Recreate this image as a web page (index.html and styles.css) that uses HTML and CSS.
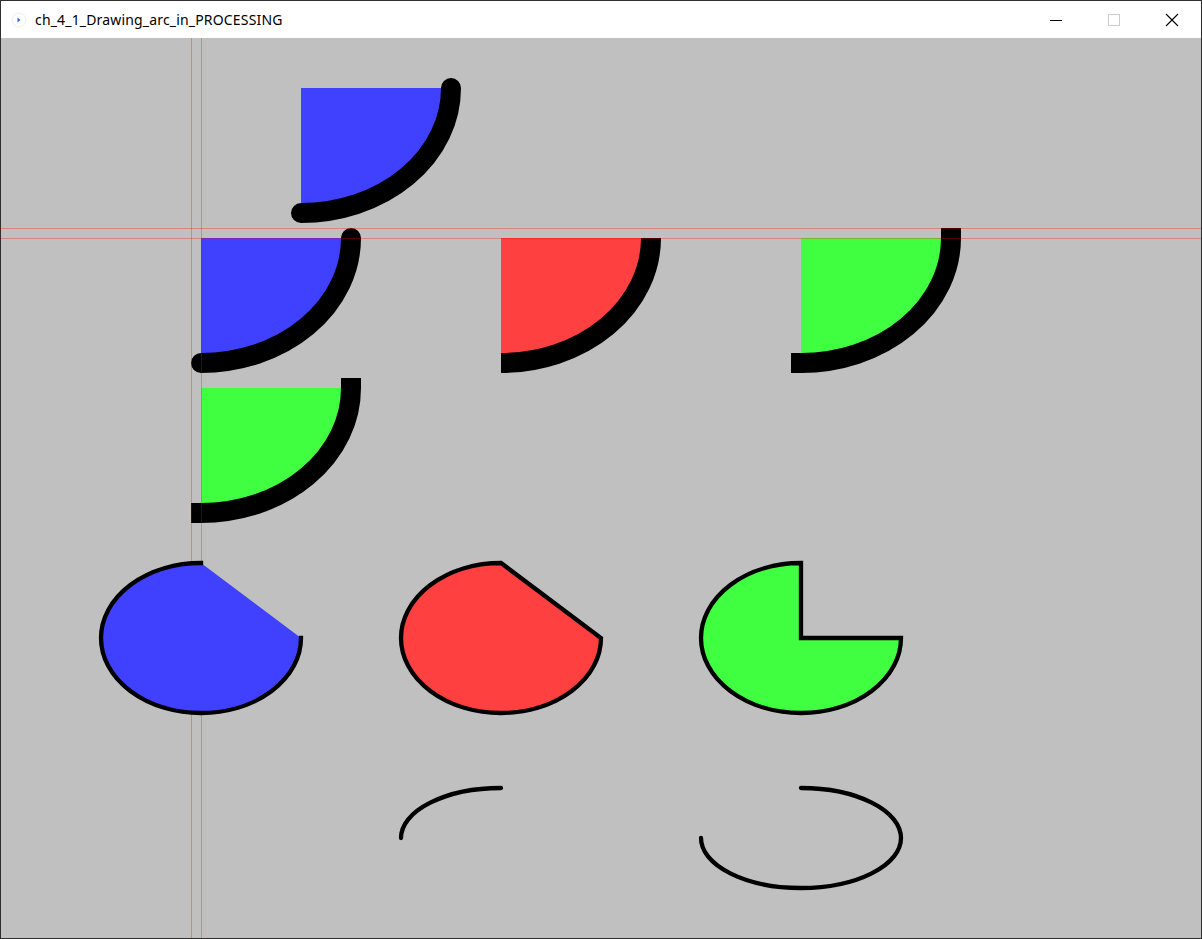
FILE: index.html
```html
<!DOCTYPE html>
<html>
<head>
<meta charset="utf-8">
<title>ch_4_1_Drawing_arc_in_PROCESSING</title>
<link rel="stylesheet" href="styles.css">
</head>
<body>
<div class="window">
  <div class="titlebar">
    <div class="app-icon">
      <svg width="16" height="16" viewBox="0 0 16 16">
        <circle cx="8" cy="8" r="7" fill="#fdfdfd" stroke="#f0f0f0"/>
        <path d="M6.5 5.5 L9.5 8 L6.5 10.5 Z" fill="#2a6fe0"/>
      </svg>
    </div>
    <div class="title">ch_4_1_Drawing_arc_in_PROCESSING</div>
    <div class="controls">
      <div class="ctl">
        <svg width="14" height="14" viewBox="0 0 14 14"><path d="M1 7.5 H13" stroke="#000" stroke-width="1"/></svg>
      </div>
      <div class="ctl">
        <svg width="14" height="14" viewBox="0 0 14 14"><rect x="1.5" y="1.5" width="11" height="11" fill="none" stroke="#cccccc" stroke-width="1"/></svg>
      </div>
      <div class="ctl">
        <svg width="14" height="14" viewBox="0 0 14 14"><path d="M1 1 L13 13 M13 1 L1 13" stroke="#000" stroke-width="1.1"/></svg>
      </div>
    </div>
  </div>
  <svg class="canvas" width="1200" height="900" viewBox="0 0 1200 900">
    <!-- row 1 -->
    <path d="M300 50 L450 50 A150 125 0 0 1 300 175 Z" class="f-blue"/>
    <path d="M450 50 A150 125 0 0 1 300 175" class="thick cap-round"/>

    <!-- row 2 -->
    <path d="M200 200 L350 200 A150 125 0 0 1 200 325 Z" class="f-blue"/>
    <path d="M350 200 A150 125 0 0 1 200 325" class="thick cap-round"/>

    <path d="M500 200 L650 200 A150 125 0 0 1 500 325 Z" class="f-red"/>
    <path d="M650 200 A150 125 0 0 1 500 325" class="thick cap-butt"/>

    <path d="M800 200 L950 200 A150 125 0 0 1 800 325 Z" class="f-green"/>
    <path d="M950 200 A150 125 0 0 1 800 325" class="thick cap-square"/>

    <!-- row 3 -->
    <path d="M200 350 L350 350 A150 125 0 0 1 200 475 Z" class="f-green"/>
    <path d="M350 350 A150 125 0 0 1 200 475" class="thick cap-square"/>

    <!-- guide lines -->
    <line x1="190.5" y1="0" x2="190.5" y2="900" class="guide"/>
    <line x1="200.5" y1="0" x2="200.5" y2="900" class="guide"/>
    <line x1="0" y1="190.5" x2="1200" y2="190.5" class="guide"/>
    <line x1="0" y1="200.5" x2="1200" y2="200.5" class="guide"/>

    <!-- row 4 -->
    <path d="M300 600 A100 75 0 1 1 200 525 Z" class="f-blue"/>
    <path d="M300 600 A100 75 0 1 1 200 525" class="thin cap-square"/>

    <path d="M600 600 A100 75 0 1 1 500 525 Z" class="f-red thin-s"/>

    <path d="M800 600 L900 600 A100 75 0 1 1 800 525 Z" class="f-green thin-s"/>

    <!-- row 5 -->
    <path d="M400 800 A100 50 0 0 1 500 750" class="thin cap-round"/>
    <path d="M800 750 A100 50 0 1 1 700 800" class="thin cap-round"/>
  </svg>
</div>
</body>
</html>
```

FILE: styles.css
```css
html, body {
  margin: 0;
  padding: 0;
  background: #2b2b2b;
}
.window {
  width: 1200px;
  height: 937px;
  border: 1px solid #2f2f2f;
  background: #ffffff;
  display: flex;
  flex-direction: column;
}
.titlebar {
  height: 37px;
  background: #ffffff;
  display: flex;
  align-items: center;
  font-family: "Noto Sans", "Open Sans", sans-serif;
  font-size: 14px;
  color: #000;
}
.app-icon {
  width: 16px;
  height: 16px;
  margin-left: 10px;
  display: flex;
}
.title {
  margin-left: 8px;
  flex: 1;
  line-height: 18px;
  letter-spacing: 0.17px;
}
.controls {
  display: flex;
  height: 100%;
}
.ctl {
  width: 58px;
  height: 100%;
  display: flex;
  align-items: center;
  justify-content: center;
}
.canvas {
  display: block;
  background: #c0c0c0;
}
.f-blue { fill: #4040ff; }
.f-red { fill: #ff4040; }
.f-green { fill: #40ff40; }
.thick {
  fill: none;
  stroke: #000;
  stroke-width: 20;
}
.thin {
  fill: none;
  stroke: #000;
  stroke-width: 4.3;
}
.thin-s {
  stroke: #000;
  stroke-width: 4.3;
  stroke-linejoin: miter;
}
.cap-round { stroke-linecap: round; }
.cap-butt { stroke-linecap: butt; }
.cap-square { stroke-linecap: square; }
.guide {
  stroke: rgba(255, 0, 0, 0.3);
  stroke-width: 1;
}
```
